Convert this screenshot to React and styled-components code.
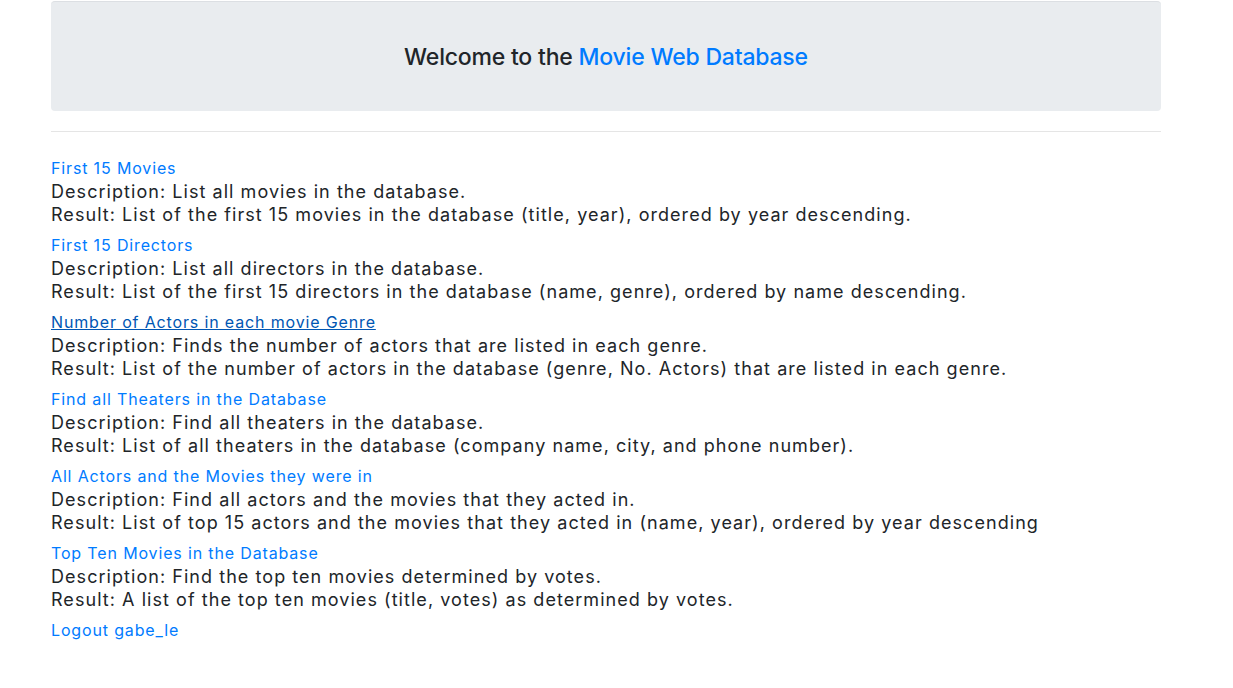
import React from "react";
import styled, { createGlobalStyle } from "styled-components";

const Global = createGlobalStyle`
  html, body { margin: 0; padding: 0; background: #fff; }
  body {
    font-family: Inter, "Liberation Sans", Arial, sans-serif;
    color: #212529;
    -webkit-font-smoothing: antialiased;
  }
`;

const Container = styled.div`
  width: 1110px;
  margin-left: 51px;
  padding-top: 1px;
`;

const Jumbotron = styled.header`
  height: 110px;
  box-sizing: border-box;
  background: #e9ecef;
  border-top: 1px solid #dcdfe3;
  border-radius: 4px;
  display: flex;
  align-items: center;
  justify-content: center;
`;

const Title = styled.h1`
  margin: 0;
  font-size: 23px;
  font-weight: 500;
  letter-spacing: -0.2px;
  color: #212529;
`;

const Brand = styled.span`
  color: #007bff;
`;

const Rule = styled.hr`
  border: 0;
  border-top: 1px solid rgba(0, 0, 0, 0.1);
  margin: 20px 0 0;
`;

const List = styled.div`
  display: flex;
  flex-direction: column;
  gap: 8px;
  padding-top: 25px;
`;

const Item = styled.div`
  display: flex;
  flex-direction: column;
`;

const QueryLink = styled.a`
  font-size: 16px;
  line-height: 23px;
  letter-spacing: 0.85px;
  color: ${(p) => (p.$hover ? "#0056b3" : "#007bff")};
  text-decoration: ${(p) => (p.$hover ? "underline" : "none")};
  align-self: flex-start;
  cursor: pointer;
`;

const Line = styled.div`
  font-size: 18px;
  line-height: 23px;
  letter-spacing: 1.05px;
  color: #212529;
`;

const queries = [
  {
    title: "First 15 Movies",
    desc: "Description: List all movies in the database.",
    result: "Result: List of the first 15 movies in the database (title, year), ordered by year descending.",
  },
  {
    title: "First 15 Directors",
    desc: "Description: List all directors in the database.",
    result: "Result: List of the first 15 directors in the database (name, genre), ordered by name descending.",
  },
  {
    title: "Number of Actors in each movie Genre",
    desc: "Description: Finds the number of actors that are listed in each genre.",
    result: "Result: List of the number of actors in the database (genre, No. Actors) that are listed in each genre.",
    hover: true,
  },
  {
    title: "Find all Theaters in the Database",
    desc: "Description: Find all theaters in the database.",
    result: "Result: List of all theaters in the database (company name, city, and phone number).",
  },
  {
    title: "All Actors and the Movies they were in",
    desc: "Description: Find all actors and the movies that they acted in.",
    result: "Result: List of top 15 actors and the movies that they acted in (name, year), ordered by year descending",
  },
  {
    title: "Top Ten Movies in the Database",
    desc: "Description: Find the top ten movies determined by votes.",
    result: "Result: A list of the top ten movies (title, votes) as determined by votes.",
  },
];

export default function App() {
  return (
    <>
      <Global />
      <Container>
        <Jumbotron>
          <Title>
            Welcome to the <Brand>Movie Web Database</Brand>
          </Title>
        </Jumbotron>
        <Rule />
        <List>
          {queries.map((q) => (
            <Item key={q.title}>
              <QueryLink $hover={q.hover}>{q.title}</QueryLink>
              <Line>{q.desc}</Line>
              <Line>{q.result}</Line>
            </Item>
          ))}
          <Item>
            <QueryLink>Logout gabe_le</QueryLink>
          </Item>
        </List>
      </Container>
    </>
  );
}
